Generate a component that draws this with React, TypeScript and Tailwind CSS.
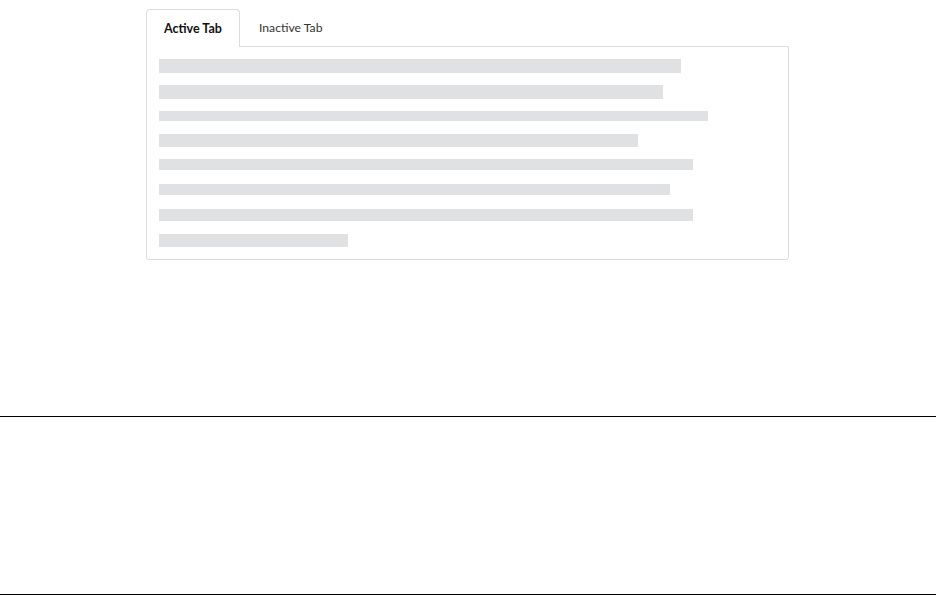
import React from "react";

const bars: { w: string; h: string; mt: string }[] = [
  { w: "w-[522px]", h: "h-[14px]", mt: "mt-0" },
  { w: "w-[504px]", h: "h-[14px]", mt: "mt-[12px]" },
  { w: "w-[549px]", h: "h-[10px]", mt: "mt-[12px]" },
  { w: "w-[479px]", h: "h-[13px]", mt: "mt-[13px]" },
  { w: "w-[534px]", h: "h-[11px]", mt: "mt-[12px]" },
  { w: "w-[511px]", h: "h-[11px]", mt: "mt-[14px]" },
  { w: "w-[534px]", h: "h-[12px]", mt: "mt-[14px]" },
  { w: "w-[189px]", h: "h-[13px]", mt: "mt-[13px]" },
];

export default function App() {
  return (
    <div
      className="w-full h-[595px] bg-white flex flex-col"
      style={{ fontFamily: "Lato, 'Noto Sans', sans-serif" }}
    >
      <div className="h-[416px] pt-[9px]">
        <div className="w-[643px] ml-[146px]">
          <div className="flex items-end h-[37px]">
            <div className="relative z-10 -mb-px h-[38px] w-[94px] pl-[17px] pt-[2px] flex items-center bg-white border-l border-t border-r border-[#dcdcdc] rounded-t-[4px] text-[12.5px] font-bold text-[#111]">
              Active Tab
            </div>
            <div className="h-[37px] pl-[19px] pt-[2px] flex items-center text-[12.2px] text-[#333]">
              Inactive Tab
            </div>
          </div>
          <div className="border border-[#dcdcdc] rounded-b-[3px] bg-white pt-3 px-3 pb-3 flex flex-col">
            {bars.map((b, i) => (
              <div key={i} className={`${b.w} ${b.h} ${b.mt} bg-[#e0e1e3]`} />
            ))}
          </div>
        </div>
      </div>
      <div className="h-[179px] border-t border-b border-black" />
    </div>
  );
}
